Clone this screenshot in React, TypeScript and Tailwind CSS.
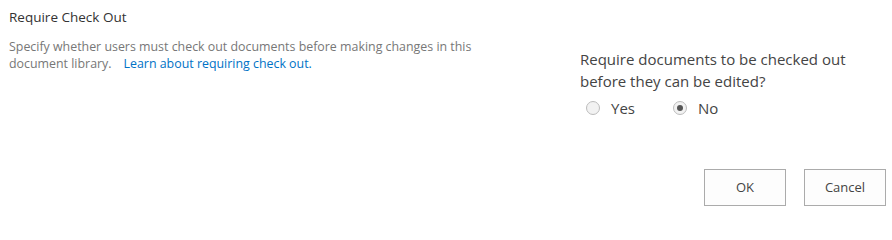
import React from 'react';

// Radio circle like the SharePoint one
function Radio({ checked }: { checked?: boolean }) {
  return (
    <span className="flex h-[14px] w-[14px] items-center justify-center rounded-full border border-[#bcbcbc] bg-[#f2f2f2]">
      {checked && <span className="h-[6px] w-[6px] rounded-full bg-[#555555]" />}
    </span>
  );
}

export default function App() {
  return (
    <div className="h-[210px] w-[892px] bg-white font-['Open_Sans','Liberation_Sans',sans-serif]">
      <div className="flex">
        <div className="w-[580px] pl-[9px] pt-[7px]">
          <h3 className="text-[13.5px] leading-[20px] text-[#333333]">Require Check Out</h3>
          <div className="mt-[11px] text-[12.4px] leading-[17px] text-[#777777]">
            <div>Specify whether users must check out documents before making changes in this</div>
            <div className="flex gap-[12px]">
              <span>document library.</span>
              <span className="text-[#0072c6]">Learn about requiring check out.</span>
            </div>
          </div>
        </div>
        <div className="pt-[48px]">
          <div className="text-[15px] leading-[22px] text-[#444444]">
            Require documents to be checked out
            <br />
            before they can be edited?
          </div>
          <div className="mt-[5px] flex items-center text-[15px] leading-[22px] text-[#444444]">
            <label className="flex items-center gap-[11px] pl-[6px]">
              <Radio />
              Yes
            </label>
            <label className="ml-[38px] flex items-center gap-[11px]">
              <Radio checked />
              No
            </label>
          </div>
        </div>
      </div>
      <div className="mt-[50px] flex justify-end gap-[18px] pr-[6px]">
        <button className="h-[37px] w-[82px] border border-[#ababab] bg-[#fdfdfd] text-[13px] text-[#444444]">
          OK
        </button>
        <button className="h-[37px] w-[82px] border border-[#ababab] bg-[#fdfdfd] text-[13px] text-[#444444]">
          Cancel
        </button>
      </div>
    </div>
  );
}
